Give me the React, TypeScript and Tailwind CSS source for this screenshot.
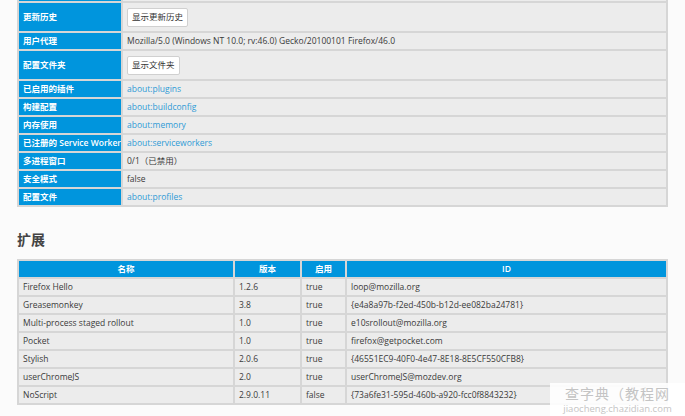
import React from "react";

const font = { fontFamily: '"Open Sans", "Noto Sans CJK SC", sans-serif' };

type Row = { label: string; value: React.ReactNode; tall?: boolean };

function Btn({ children }: { children: React.ReactNode }) {
  return (
    <span className="inline-flex items-center h-[19px] px-[4px] bg-white border border-[#d0d0d0] rounded-[2px] text-[#333]">
      {children}
    </span>
  );
}

function Link({ children }: { children: React.ReactNode }) {
  return <span className="text-[#2f9bd6]">{children}</span>;
}

const basics: Row[] = [
  { label: "", value: "" },
  { label: "更新历史", value: <Btn>显示更新历史</Btn>, tall: true },
  { label: "用户代理", value: "Mozilla/5.0 (Windows NT 10.0; rv:46.0) Gecko/20100101 Firefox/46.0" },
  { label: "配置文件夹", value: <Btn>显示文件夹</Btn>, tall: true },
  { label: "已启用的插件", value: <Link>about:plugins</Link> },
  { label: "构建配置", value: <Link>about:buildconfig</Link> },
  { label: "内存使用", value: <Link>about:memory</Link> },
  { label: "已注册的 Service Worker", value: <Link>about:serviceworkers</Link> },
  { label: "多进程窗口", value: "0/1（已禁用）" },
  { label: "安全模式", value: "false" },
  { label: "配置文件", value: <Link>about:profiles</Link> },
];

const extensions = [
  ["Firefox Hello", "1.2.6", "true", "loop@mozilla.org"],
  ["Greasemonkey", "3.8", "true", "{e4a8a97b-f2ed-450b-b12d-ee082ba24781}"],
  ["Multi-process staged rollout", "1.0", "true", "e10srollout@mozilla.org"],
  ["Pocket", "1.0", "true", "firefox@getpocket.com"],
  ["Stylish", "2.0.6", "true", "{46551EC9-40F0-4e47-8E18-8E5CF550CFB8}"],
  ["userChromeJS", "2.0", "true", "userChromeJS@mozdev.org"],
  ["NoScript", "2.9.0.11", "false", "{73a6fe31-595d-460b-a920-fcc0f8843232}"],
];

export default function App() {
  return (
    <div className="relative w-[685px] h-[416px] overflow-hidden bg-[#fbfbfb] text-[#3a3a3a] text-[8.5px]" style={font}>
      <div className="px-[17px] mt-[-17px]">
        <table className="w-full border-collapse table-fixed">
          <tbody>
            {basics.map((r, i) => (
              <tr key={i} className={r.tall ? "h-[30px]" : "h-[18px]"}>
                <th className="w-[104px] p-0 pl-[4px] text-left font-semibold text-white bg-[#0095dd] border-2 border-[#d6d6d6] whitespace-nowrap leading-none">
                  {r.label}
                </th>
                <td className="p-0 pl-[4px] bg-[#ececec] border-2 border-[#d6d6d6] leading-none">{r.value}</td>
              </tr>
            ))}
          </tbody>
        </table>

        <h2 className="mt-[24px] mb-[10px] text-[14px] font-bold text-[#444] leading-[18px]">扩展</h2>

        <table className="w-full border-collapse table-fixed">
          <thead>
            <tr className="h-[18px]">
              {["名称", "版本", "启用", "ID"].map((h, i) => (
                <th
                  key={h}
                  className={`p-0 text-center font-semibold text-white bg-[#0095dd] border-2 border-[#d6d6d6] leading-none ${
                    i === 0 ? "w-[216px]" : i === 1 ? "w-[67px]" : i === 2 ? "w-[45px]" : ""
                  }`}
                >
                  {h}
                </th>
              ))}
            </tr>
          </thead>
          <tbody>
            {extensions.map((e) => (
              <tr key={e[0]} className="h-[18px]">
                {e.map((c, i) => (
                  <td key={i} className="p-0 pl-[4px] bg-[#ececec] border-2 border-[#d6d6d6] leading-none whitespace-nowrap">
                    {c}
                  </td>
                ))}
              </tr>
            ))}
          </tbody>
        </table>
      </div>

      <div className="absolute left-[550px] top-[383px] w-[135px] h-[33px] bg-white/90 flex flex-col items-center justify-center gap-[1px]">
        <span className="text-[14px] leading-[16px] text-[#c4c4c4] tracking-[1px]">查字典（教程网</span>
        <span className="text-[9.5px] leading-[11px] text-[#c4c4c4]">jiaocheng.chazidian.com</span>
      </div>
    </div>
  );
}
